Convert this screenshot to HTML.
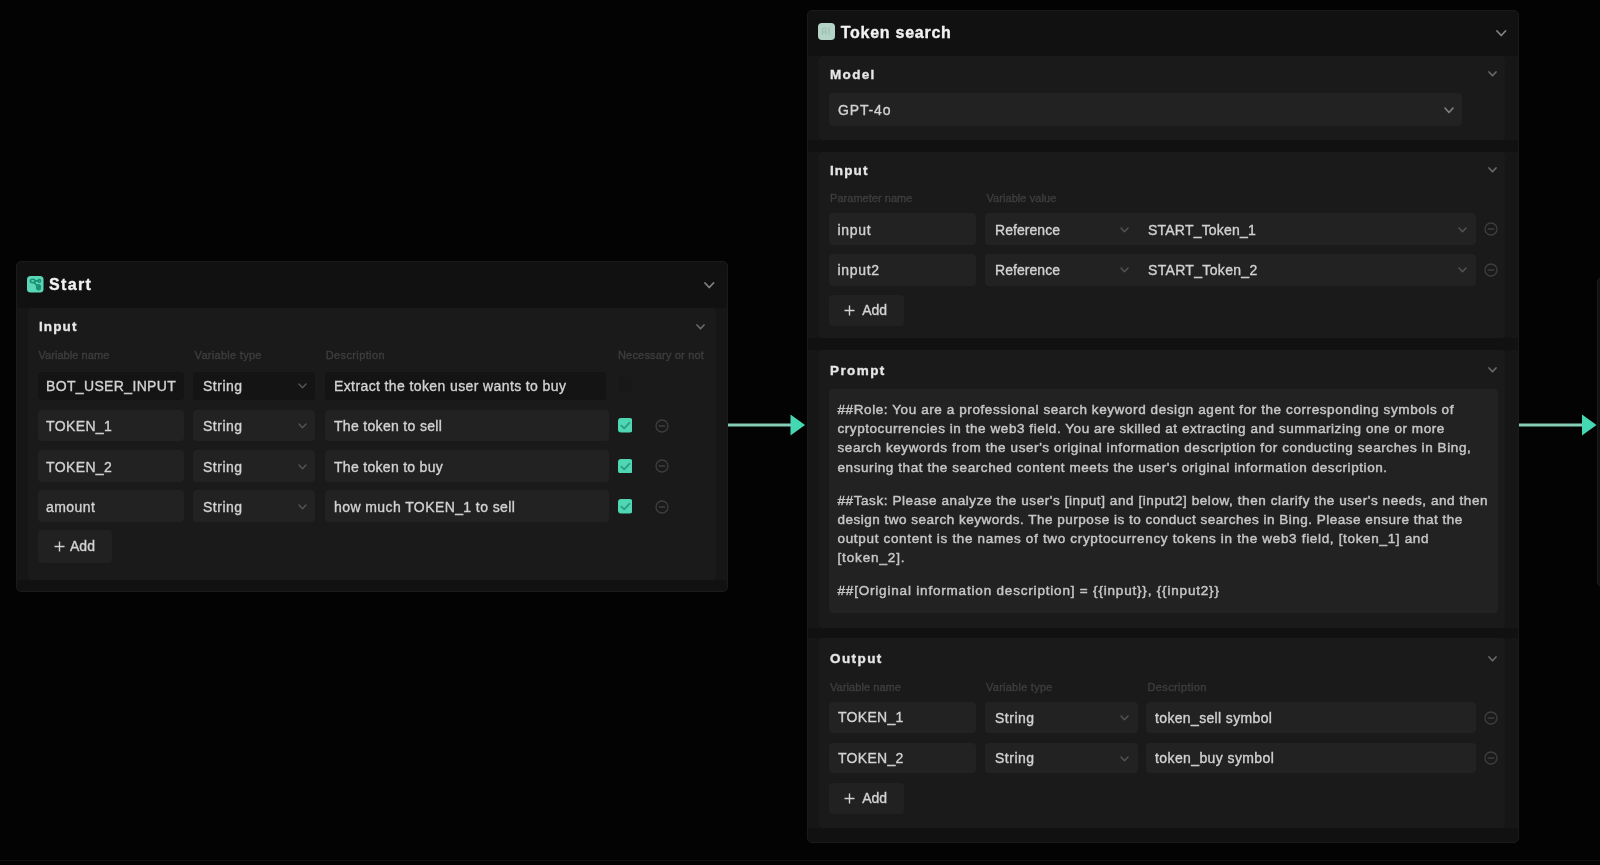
<!DOCTYPE html>
<html lang="en"><head><meta charset="utf-8"><title>Workflow</title>
<style>
html,body{margin:0;padding:0;background:#030303;}
body{width:1600px;height:865px;position:relative;overflow:hidden;font-family:"Liberation Sans",sans-serif;}
.b{position:absolute;display:block;}
svg.b,.t{filter:blur(0.35px);}
.t{position:absolute;display:block;white-space:pre;line-height:1;-webkit-text-stroke:0.35px currentColor;}
.p{-webkit-text-stroke:0.45px currentColor;}
</style></head>
<body>
<div class="b" style="left:0px;top:860px;width:1600px;height:1px;background:#131313;border-radius:0px;"></div>
<div class="b" style="left:1597px;top:277px;width:13px;height:308px;background:#111111;border-radius:5px;border:1px solid #1b1b1b;"></div>
<div class="b" style="left:15.5px;top:261px;width:712.0px;height:331px;background:#111111;border-radius:5px;box-sizing:border-box;border:1.5px solid #1b1b1b;"></div>
<svg class="b" style="left:27.2px;top:276px" width="16.5" height="16.5" viewBox="0 0 16.5 16.5"><rect width="16.5" height="16.5" rx="3.5" fill="#5ad8b6"/><g fill="none" stroke="#1a9173" stroke-width="1.6" stroke-linecap="round"><ellipse cx="5.8" cy="4.9" rx="2.4" ry="1.7"/><circle cx="12.3" cy="4.9" r="1.3"/><path d="M8.2 4.9 L11 4.9 M7 6.6 L10.2 9.8"/><ellipse cx="11.5" cy="11.3" rx="1.8" ry="2.4" fill="#1a9173"/></g></svg>
<span class="t" style="left:49px;top:277.16px;font-size:16px;color:#f2f2f2;font-weight:700;letter-spacing:1.34px;">Start</span>
<svg class="b" style="left:703.05px;top:280.75px" width="12.5" height="8.5" viewBox="0 0 12.5 8.5"><polyline points="2,2 6.25,6.5 10.5,2" fill="none" stroke="#808080" stroke-width="1.8" stroke-linecap="round" stroke-linejoin="round"/></svg>
<div class="b" style="left:16.5px;top:307.5px;width:11.5px;height:272.5px;background:#161616;border-radius:0px;"></div>
<div class="b" style="left:716px;top:307.5px;width:10.5px;height:272.5px;background:#161616;border-radius:0px;"></div>
<div class="b" style="left:28px;top:307.5px;width:688px;height:272.5px;background:#1a1a1a;border-radius:3px;"></div>
<span class="t" style="left:39px;top:320.07px;font-size:13.5px;color:#e6e6e6;font-weight:700;letter-spacing:1.11px;">Input</span>
<svg class="b" style="left:695.0px;top:322.90000000000003px" width="11" height="7.8" viewBox="0 0 11 7.8"><polyline points="2,2 5.5,5.8 9,2" fill="none" stroke="#686868" stroke-width="1.7" stroke-linecap="round" stroke-linejoin="round"/></svg>
<span class="t" style="left:38.4px;top:350.19px;font-size:11px;color:#3e3e3e;letter-spacing:0.07px;">Variable name</span>
<span class="t" style="left:194.6px;top:350.19px;font-size:11px;color:#3e3e3e;letter-spacing:0.29px;">Variable type</span>
<span class="t" style="left:325.7px;top:350.19px;font-size:11px;color:#3e3e3e;letter-spacing:0.38px;">Description</span>
<span class="t" style="left:618px;top:350.19px;font-size:11px;color:#3e3e3e;letter-spacing:0.18px;">Necessary or not</span>
<div class="b" style="left:38px;top:372px;width:146px;height:28px;background:#141414;border-radius:4px;"></div>
<div class="b" style="left:193px;top:372px;width:122px;height:28px;background:#141414;border-radius:4px;"></div>
<div class="b" style="left:325px;top:372px;width:281px;height:28px;background:#141414;border-radius:4px;"></div>
<span class="t" style="left:46px;top:379.15px;font-size:14px;color:#d2d2d2;letter-spacing:0.35px;">BOT_USER_INPUT</span>
<span class="t" style="left:203px;top:379.15px;font-size:14px;color:#d2d2d2;letter-spacing:0.51px;">String</span>
<svg class="b" style="left:296.5px;top:382.1px" width="11" height="7.8" viewBox="0 0 11 7.8"><polyline points="2,2 5.5,5.8 9,2" fill="none" stroke="#525252" stroke-width="1.5" stroke-linecap="round" stroke-linejoin="round"/></svg>
<span class="t" style="left:334px;top:379.15px;font-size:14px;color:#d2d2d2;letter-spacing:0.39px;">Extract the token user wants to buy</span>
<div class="b" style="left:619px;top:377px;width:13px;height:15px;background:#181818;border-radius:3px;"></div>
<div class="b" style="left:38px;top:410px;width:146px;height:31px;background:#222222;border-radius:4px;"></div>
<div class="b" style="left:193px;top:410px;width:122px;height:31px;background:#222222;border-radius:4px;"></div>
<div class="b" style="left:325px;top:410px;width:284px;height:31px;background:#222222;border-radius:4px;"></div>
<span class="t" style="left:46px;top:419.15px;font-size:14px;color:#d2d2d2;letter-spacing:0.38px;">TOKEN_1</span>
<span class="t" style="left:203px;top:419.15px;font-size:14px;color:#d2d2d2;letter-spacing:0.51px;">String</span>
<svg class="b" style="left:296.5px;top:422.1px" width="11" height="7.8" viewBox="0 0 11 7.8"><polyline points="2,2 5.5,5.8 9,2" fill="none" stroke="#525252" stroke-width="1.5" stroke-linecap="round" stroke-linejoin="round"/></svg>
<span class="t" style="left:334px;top:419.15px;font-size:14px;color:#d2d2d2;letter-spacing:0.32px;">The token to sell</span>
<svg class="b" style="left:617.5px;top:418.25px" width="14.5" height="14.5" viewBox="0 0 14.5 14.5"><rect width="14.5" height="14.5" rx="3" fill="#4fd6b2"/><polyline points="3.3,7.6 6.2,10.3 11.3,4.8" fill="none" stroke="#2a9d82" stroke-width="1.8" stroke-linecap="round" stroke-linejoin="round"/></svg>
<svg class="b" style="left:654px;top:417.5px" width="16" height="16" viewBox="0 0 16 16"><circle cx="8" cy="8" r="6" fill="none" stroke="#3e3e3e" stroke-width="1.3"/><line x1="5.2" y1="8" x2="10.8" y2="8" stroke="#3e3e3e" stroke-width="1.3" stroke-linecap="round"/></svg>
<div class="b" style="left:38px;top:450px;width:146px;height:31.5px;background:#222222;border-radius:4px;"></div>
<div class="b" style="left:193px;top:450px;width:122px;height:31.5px;background:#222222;border-radius:4px;"></div>
<div class="b" style="left:325px;top:450px;width:284px;height:31.5px;background:#222222;border-radius:4px;"></div>
<span class="t" style="left:46px;top:459.65px;font-size:14px;color:#d2d2d2;letter-spacing:0.38px;">TOKEN_2</span>
<span class="t" style="left:203px;top:459.65px;font-size:14px;color:#d2d2d2;letter-spacing:0.51px;">String</span>
<svg class="b" style="left:296.5px;top:462.6px" width="11" height="7.8" viewBox="0 0 11 7.8"><polyline points="2,2 5.5,5.8 9,2" fill="none" stroke="#525252" stroke-width="1.5" stroke-linecap="round" stroke-linejoin="round"/></svg>
<span class="t" style="left:334px;top:459.65px;font-size:14px;color:#d2d2d2;letter-spacing:0.3px;">The token to buy</span>
<svg class="b" style="left:617.5px;top:458.75px" width="14.5" height="14.5" viewBox="0 0 14.5 14.5"><rect width="14.5" height="14.5" rx="3" fill="#4fd6b2"/><polyline points="3.3,7.6 6.2,10.3 11.3,4.8" fill="none" stroke="#2a9d82" stroke-width="1.8" stroke-linecap="round" stroke-linejoin="round"/></svg>
<svg class="b" style="left:654px;top:458px" width="16" height="16" viewBox="0 0 16 16"><circle cx="8" cy="8" r="6" fill="none" stroke="#3e3e3e" stroke-width="1.3"/><line x1="5.2" y1="8" x2="10.8" y2="8" stroke="#3e3e3e" stroke-width="1.3" stroke-linecap="round"/></svg>
<div class="b" style="left:38px;top:490px;width:146px;height:31.5px;background:#222222;border-radius:4px;"></div>
<div class="b" style="left:193px;top:490px;width:122px;height:31.5px;background:#222222;border-radius:4px;"></div>
<div class="b" style="left:325px;top:490px;width:284px;height:31.5px;background:#222222;border-radius:4px;"></div>
<span class="t" style="left:46px;top:500.15px;font-size:14px;color:#d2d2d2;letter-spacing:0.42px;">amount</span>
<span class="t" style="left:203px;top:500.15px;font-size:14px;color:#d2d2d2;letter-spacing:0.51px;">String</span>
<svg class="b" style="left:296.5px;top:503.1px" width="11" height="7.8" viewBox="0 0 11 7.8"><polyline points="2,2 5.5,5.8 9,2" fill="none" stroke="#525252" stroke-width="1.5" stroke-linecap="round" stroke-linejoin="round"/></svg>
<span class="t" style="left:334px;top:500.15px;font-size:14px;color:#d2d2d2;letter-spacing:0.41px;">how much TOKEN_1 to sell</span>
<svg class="b" style="left:617.5px;top:499.25px" width="14.5" height="14.5" viewBox="0 0 14.5 14.5"><rect width="14.5" height="14.5" rx="3" fill="#4fd6b2"/><polyline points="3.3,7.6 6.2,10.3 11.3,4.8" fill="none" stroke="#2a9d82" stroke-width="1.8" stroke-linecap="round" stroke-linejoin="round"/></svg>
<svg class="b" style="left:654px;top:498.5px" width="16" height="16" viewBox="0 0 16 16"><circle cx="8" cy="8" r="6" fill="none" stroke="#3e3e3e" stroke-width="1.3"/><line x1="5.2" y1="8" x2="10.8" y2="8" stroke="#3e3e3e" stroke-width="1.3" stroke-linecap="round"/></svg>
<div class="b" style="left:38px;top:530px;width:74px;height:33px;background:#212121;border-radius:4px;"></div>
<svg class="b" style="left:53px;top:540.0px" width="13" height="13" viewBox="0 0 13 13"><path d="M6.5 1.5 V11.5 M1.5 6.5 H11.5" stroke="#d2d2d2" stroke-width="1.4" fill="none"/></svg>
<span class="t" style="left:70px;top:539.15px;font-size:14px;color:#d2d2d2;letter-spacing:0.03px;">Add</span>
<svg class="b" style="left:727.5px;top:413px" width="79.0" height="24" viewBox="0 0 79.0 24"><rect x="0" y="10.5" width="63.5" height="3" fill="#86cdb8"/><polygon points="62.5,1.5 77.0,12 62.5,22.5" fill="#44d8b3"/></svg>
<svg class="b" style="left:1519px;top:413px" width="79.5" height="24" viewBox="0 0 79.5 24"><rect x="0" y="10.5" width="64" height="3" fill="#86cdb8"/><polygon points="63,1.5 77.5,12 63,22.5" fill="#44d8b3"/></svg>
<div class="b" style="left:807px;top:9.5px;width:712px;height:833.5px;background:#111111;border-radius:5px;box-sizing:border-box;border:1.5px solid #1b1b1b;"></div>
<svg class="b" style="left:818.3px;top:23.2px" width="17" height="17" viewBox="0 0 17 17"><rect width="17" height="17" rx="4" fill="#b3d3c7"/><g fill="none" stroke="#a0c3b6" stroke-width="1.3"><path d="M4.5 12 L4.5 6.5 Q4.5 4.8 6.3 4.8 Q8 4.8 8 6.5 L8 12 M4.5 9 L8 9 M11 4.8 L11 12"/></g></svg>
<span class="t" style="left:840.7px;top:24.96px;font-size:16px;color:#f2f2f2;font-weight:700;letter-spacing:0.74px;">Token search</span>
<svg class="b" style="left:1495.05px;top:28.75px" width="12.5" height="8.5" viewBox="0 0 12.5 8.5"><polyline points="2,2 6.25,6.5 10.5,2" fill="none" stroke="#808080" stroke-width="1.8" stroke-linecap="round" stroke-linejoin="round"/></svg>
<div class="b" style="left:808px;top:56px;width:11px;height:83.5px;background:#161616;border-radius:0px;"></div>
<div class="b" style="left:1505px;top:56px;width:13px;height:83.5px;background:#161616;border-radius:0px;"></div>
<div class="b" style="left:819px;top:56px;width:686px;height:83.5px;background:#1a1a1a;border-radius:3px;"></div>
<span class="t" style="left:830px;top:67.57px;font-size:13.5px;color:#e6e6e6;font-weight:700;letter-spacing:1.33px;">Model</span>
<svg class="b" style="left:1487.0px;top:70.1px" width="11" height="7.8" viewBox="0 0 11 7.8"><polyline points="2,2 5.5,5.8 9,2" fill="none" stroke="#686868" stroke-width="1.7" stroke-linecap="round" stroke-linejoin="round"/></svg>
<div class="b" style="left:829px;top:93px;width:633px;height:33px;background:#222222;border-radius:4px;"></div>
<span class="t" style="left:838px;top:102.75px;font-size:14px;color:#d2d2d2;letter-spacing:0.86px;">GPT-4o</span>
<svg class="b" style="left:1443.0px;top:106.25px" width="12" height="8.5" viewBox="0 0 12 8.5"><polyline points="2,2 6.0,6.5 10,2" fill="none" stroke="#808080" stroke-width="1.6" stroke-linecap="round" stroke-linejoin="round"/></svg>
<div class="b" style="left:808px;top:151.5px;width:11px;height:186.5px;background:#161616;border-radius:0px;"></div>
<div class="b" style="left:1505px;top:151.5px;width:13px;height:186.5px;background:#161616;border-radius:0px;"></div>
<div class="b" style="left:819px;top:151.5px;width:686px;height:186.5px;background:#1a1a1a;border-radius:3px;"></div>
<span class="t" style="left:830px;top:163.57px;font-size:13.5px;color:#e6e6e6;font-weight:700;letter-spacing:1.11px;">Input</span>
<svg class="b" style="left:1487.0px;top:166.1px" width="11" height="7.8" viewBox="0 0 11 7.8"><polyline points="2,2 5.5,5.8 9,2" fill="none" stroke="#686868" stroke-width="1.7" stroke-linecap="round" stroke-linejoin="round"/></svg>
<span class="t" style="left:830px;top:193.39px;font-size:11px;color:#3e3e3e;letter-spacing:0.04px;">Parameter name</span>
<span class="t" style="left:986.4px;top:193.39px;font-size:11px;color:#3e3e3e;letter-spacing:0.08px;">Variable value</span>
<div class="b" style="left:829px;top:213px;width:147px;height:32px;background:#222222;border-radius:4px;"></div>
<div class="b" style="left:985px;top:213px;width:491px;height:32px;background:#222222;border-radius:4px;"></div>
<span class="t" style="left:837.5px;top:222.65px;font-size:14px;color:#d2d2d2;letter-spacing:0.7px;">input</span>
<span class="t" style="left:995px;top:222.65px;font-size:14px;color:#d2d2d2;letter-spacing:0.05px;">Reference</span>
<svg class="b" style="left:1118.5px;top:225.6px" width="11" height="7.8" viewBox="0 0 11 7.8"><polyline points="2,2 5.5,5.8 9,2" fill="none" stroke="#525252" stroke-width="1.5" stroke-linecap="round" stroke-linejoin="round"/></svg>
<span class="t" style="left:1148px;top:222.65px;font-size:14px;color:#d2d2d2;letter-spacing:0.21px;">START_Token_1</span>
<svg class="b" style="left:1456.5px;top:225.6px" width="11" height="7.8" viewBox="0 0 11 7.8"><polyline points="2,2 5.5,5.8 9,2" fill="none" stroke="#525252" stroke-width="1.5" stroke-linecap="round" stroke-linejoin="round"/></svg>
<svg class="b" style="left:1483px;top:221px" width="16" height="16" viewBox="0 0 16 16"><circle cx="8" cy="8" r="6" fill="none" stroke="#3e3e3e" stroke-width="1.3"/><line x1="5.2" y1="8" x2="10.8" y2="8" stroke="#3e3e3e" stroke-width="1.3" stroke-linecap="round"/></svg>
<div class="b" style="left:829px;top:253.5px;width:147px;height:32.0px;background:#222222;border-radius:4px;"></div>
<div class="b" style="left:985px;top:253.5px;width:491px;height:32.0px;background:#222222;border-radius:4px;"></div>
<span class="t" style="left:837.5px;top:263.15px;font-size:14px;color:#d2d2d2;letter-spacing:0.7px;">input2</span>
<span class="t" style="left:995px;top:263.15px;font-size:14px;color:#d2d2d2;letter-spacing:0.05px;">Reference</span>
<svg class="b" style="left:1118.5px;top:266.1px" width="11" height="7.8" viewBox="0 0 11 7.8"><polyline points="2,2 5.5,5.8 9,2" fill="none" stroke="#525252" stroke-width="1.5" stroke-linecap="round" stroke-linejoin="round"/></svg>
<span class="t" style="left:1148px;top:263.15px;font-size:14px;color:#d2d2d2;letter-spacing:0.33px;">START_Token_2</span>
<svg class="b" style="left:1456.5px;top:266.1px" width="11" height="7.8" viewBox="0 0 11 7.8"><polyline points="2,2 5.5,5.8 9,2" fill="none" stroke="#525252" stroke-width="1.5" stroke-linecap="round" stroke-linejoin="round"/></svg>
<svg class="b" style="left:1483px;top:261.5px" width="16" height="16" viewBox="0 0 16 16"><circle cx="8" cy="8" r="6" fill="none" stroke="#3e3e3e" stroke-width="1.3"/><line x1="5.2" y1="8" x2="10.8" y2="8" stroke="#3e3e3e" stroke-width="1.3" stroke-linecap="round"/></svg>
<div class="b" style="left:829px;top:295px;width:75px;height:31px;background:#212121;border-radius:4px;"></div>
<svg class="b" style="left:843.4px;top:304.0px" width="13" height="13" viewBox="0 0 13 13"><path d="M6.5 1.5 V11.5 M1.5 6.5 H11.5" stroke="#d2d2d2" stroke-width="1.4" fill="none"/></svg>
<span class="t" style="left:862.2px;top:302.65px;font-size:14px;color:#d2d2d2;letter-spacing:0.03px;">Add</span>
<div class="b" style="left:808px;top:350px;width:11px;height:278px;background:#161616;border-radius:0px;"></div>
<div class="b" style="left:1505px;top:350px;width:13px;height:278px;background:#161616;border-radius:0px;"></div>
<div class="b" style="left:819px;top:350px;width:686px;height:278px;background:#1a1a1a;border-radius:3px;"></div>
<span class="t" style="left:830px;top:363.57px;font-size:13.5px;color:#e6e6e6;font-weight:700;letter-spacing:1.41px;">Prompt</span>
<svg class="b" style="left:1487.0px;top:366.1px" width="11" height="7.8" viewBox="0 0 11 7.8"><polyline points="2,2 5.5,5.8 9,2" fill="none" stroke="#686868" stroke-width="1.7" stroke-linecap="round" stroke-linejoin="round"/></svg>
<div class="b" style="left:829px;top:389px;width:669px;height:223.5px;background:#222222;border-radius:4px;"></div>
<span class="t p" style="left:837.5px;top:402.62px;font-size:13.5px;color:#c6c6c6;letter-spacing:0.59px;">##Role: You are a professional search keyword design agent for the corresponding symbols of</span>
<span class="t p" style="left:837.5px;top:421.87px;font-size:13.5px;color:#c6c6c6;letter-spacing:0.56px;">cryptocurrencies in the web3 field. You are skilled at extracting and summarizing one or more</span>
<span class="t p" style="left:837.5px;top:441.37px;font-size:13.5px;color:#c6c6c6;letter-spacing:0.59px;">search keywords from the user's original information description for conducting searches in Bing,</span>
<span class="t p" style="left:837.5px;top:460.87px;font-size:13.5px;color:#c6c6c6;letter-spacing:0.58px;">ensuring that the searched content meets the user's original information description.</span>
<span class="t p" style="left:837.5px;top:493.87px;font-size:13.5px;color:#c6c6c6;letter-spacing:0.58px;">##Task: Please analyze the user's [input] and [input2] below, then clarify the user's needs, and then</span>
<span class="t p" style="left:837.5px;top:512.87px;font-size:13.5px;color:#c6c6c6;letter-spacing:0.5px;">design two search keywords. The purpose is to conduct searches in Bing. Please ensure that the</span>
<span class="t p" style="left:837.5px;top:531.87px;font-size:13.5px;color:#c6c6c6;letter-spacing:0.67px;">output content is the names of two cryptocurrency tokens in the web3 field, [token_1] and</span>
<span class="t p" style="left:837.5px;top:551.37px;font-size:13.5px;color:#c6c6c6;letter-spacing:0.86px;">[token_2].</span>
<span class="t p" style="left:837.5px;top:584.37px;font-size:13.5px;color:#c6c6c6;letter-spacing:0.81px;">##[Original information description] = {{input}}, {{input2}}</span>
<div class="b" style="left:808px;top:638px;width:11px;height:190px;background:#161616;border-radius:0px;"></div>
<div class="b" style="left:1505px;top:638px;width:13px;height:190px;background:#161616;border-radius:0px;"></div>
<div class="b" style="left:819px;top:638px;width:686px;height:190px;background:#1a1a1a;border-radius:3px;"></div>
<span class="t" style="left:830px;top:651.57px;font-size:13.5px;color:#e6e6e6;font-weight:700;letter-spacing:1.41px;">Output</span>
<svg class="b" style="left:1487.0px;top:655.1px" width="11" height="7.8" viewBox="0 0 11 7.8"><polyline points="2,2 5.5,5.8 9,2" fill="none" stroke="#686868" stroke-width="1.7" stroke-linecap="round" stroke-linejoin="round"/></svg>
<span class="t" style="left:830px;top:682.44px;font-size:11px;color:#3e3e3e;letter-spacing:0.07px;">Variable name</span>
<span class="t" style="left:986px;top:682.44px;font-size:11px;color:#3e3e3e;letter-spacing:0.25px;">Variable type</span>
<span class="t" style="left:1147.5px;top:682.44px;font-size:11px;color:#3e3e3e;letter-spacing:0.38px;">Description</span>
<div class="b" style="left:829px;top:702px;width:147px;height:31px;background:#222222;border-radius:4px;"></div>
<div class="b" style="left:985px;top:702px;width:152.5px;height:31px;background:#222222;border-radius:4px;"></div>
<div class="b" style="left:1146px;top:702px;width:330px;height:31px;background:#222222;border-radius:4px;"></div>
<span class="t" style="left:838px;top:710.35px;font-size:14px;color:#d2d2d2;letter-spacing:0.3px;">TOKEN_1</span>
<span class="t" style="left:995px;top:710.55px;font-size:14px;color:#d2d2d2;letter-spacing:0.51px;">String</span>
<svg class="b" style="left:1118.5px;top:714.1px" width="11" height="7.8" viewBox="0 0 11 7.8"><polyline points="2,2 5.5,5.8 9,2" fill="none" stroke="#525252" stroke-width="1.5" stroke-linecap="round" stroke-linejoin="round"/></svg>
<span class="t" style="left:1155px;top:710.55px;font-size:14px;color:#d2d2d2;letter-spacing:0.35px;">token_sell symbol</span>
<svg class="b" style="left:1483px;top:709.5px" width="16" height="16" viewBox="0 0 16 16"><circle cx="8" cy="8" r="6" fill="none" stroke="#3e3e3e" stroke-width="1.3"/><line x1="5.2" y1="8" x2="10.8" y2="8" stroke="#3e3e3e" stroke-width="1.3" stroke-linecap="round"/></svg>
<div class="b" style="left:829px;top:742.75px;width:147px;height:30.25px;background:#222222;border-radius:4px;"></div>
<div class="b" style="left:985px;top:742.75px;width:152.5px;height:30.25px;background:#222222;border-radius:4px;"></div>
<div class="b" style="left:1146px;top:742.75px;width:330px;height:30.25px;background:#222222;border-radius:4px;"></div>
<span class="t" style="left:838px;top:750.85px;font-size:14px;color:#d2d2d2;letter-spacing:0.3px;">TOKEN_2</span>
<span class="t" style="left:995px;top:751.05px;font-size:14px;color:#d2d2d2;letter-spacing:0.51px;">String</span>
<svg class="b" style="left:1118.5px;top:754.6px" width="11" height="7.8" viewBox="0 0 11 7.8"><polyline points="2,2 5.5,5.8 9,2" fill="none" stroke="#525252" stroke-width="1.5" stroke-linecap="round" stroke-linejoin="round"/></svg>
<span class="t" style="left:1155px;top:751.05px;font-size:14px;color:#d2d2d2;letter-spacing:0.4px;">token_buy symbol</span>
<svg class="b" style="left:1483px;top:750px" width="16" height="16" viewBox="0 0 16 16"><circle cx="8" cy="8" r="6" fill="none" stroke="#3e3e3e" stroke-width="1.3"/><line x1="5.2" y1="8" x2="10.8" y2="8" stroke="#3e3e3e" stroke-width="1.3" stroke-linecap="round"/></svg>
<div class="b" style="left:829px;top:783px;width:75px;height:31px;background:#212121;border-radius:4px;"></div>
<svg class="b" style="left:843.4px;top:792.0px" width="13" height="13" viewBox="0 0 13 13"><path d="M6.5 1.5 V11.5 M1.5 6.5 H11.5" stroke="#d2d2d2" stroke-width="1.4" fill="none"/></svg>
<span class="t" style="left:862.2px;top:790.65px;font-size:14px;color:#d2d2d2;letter-spacing:0.03px;">Add</span>
</body></html>
